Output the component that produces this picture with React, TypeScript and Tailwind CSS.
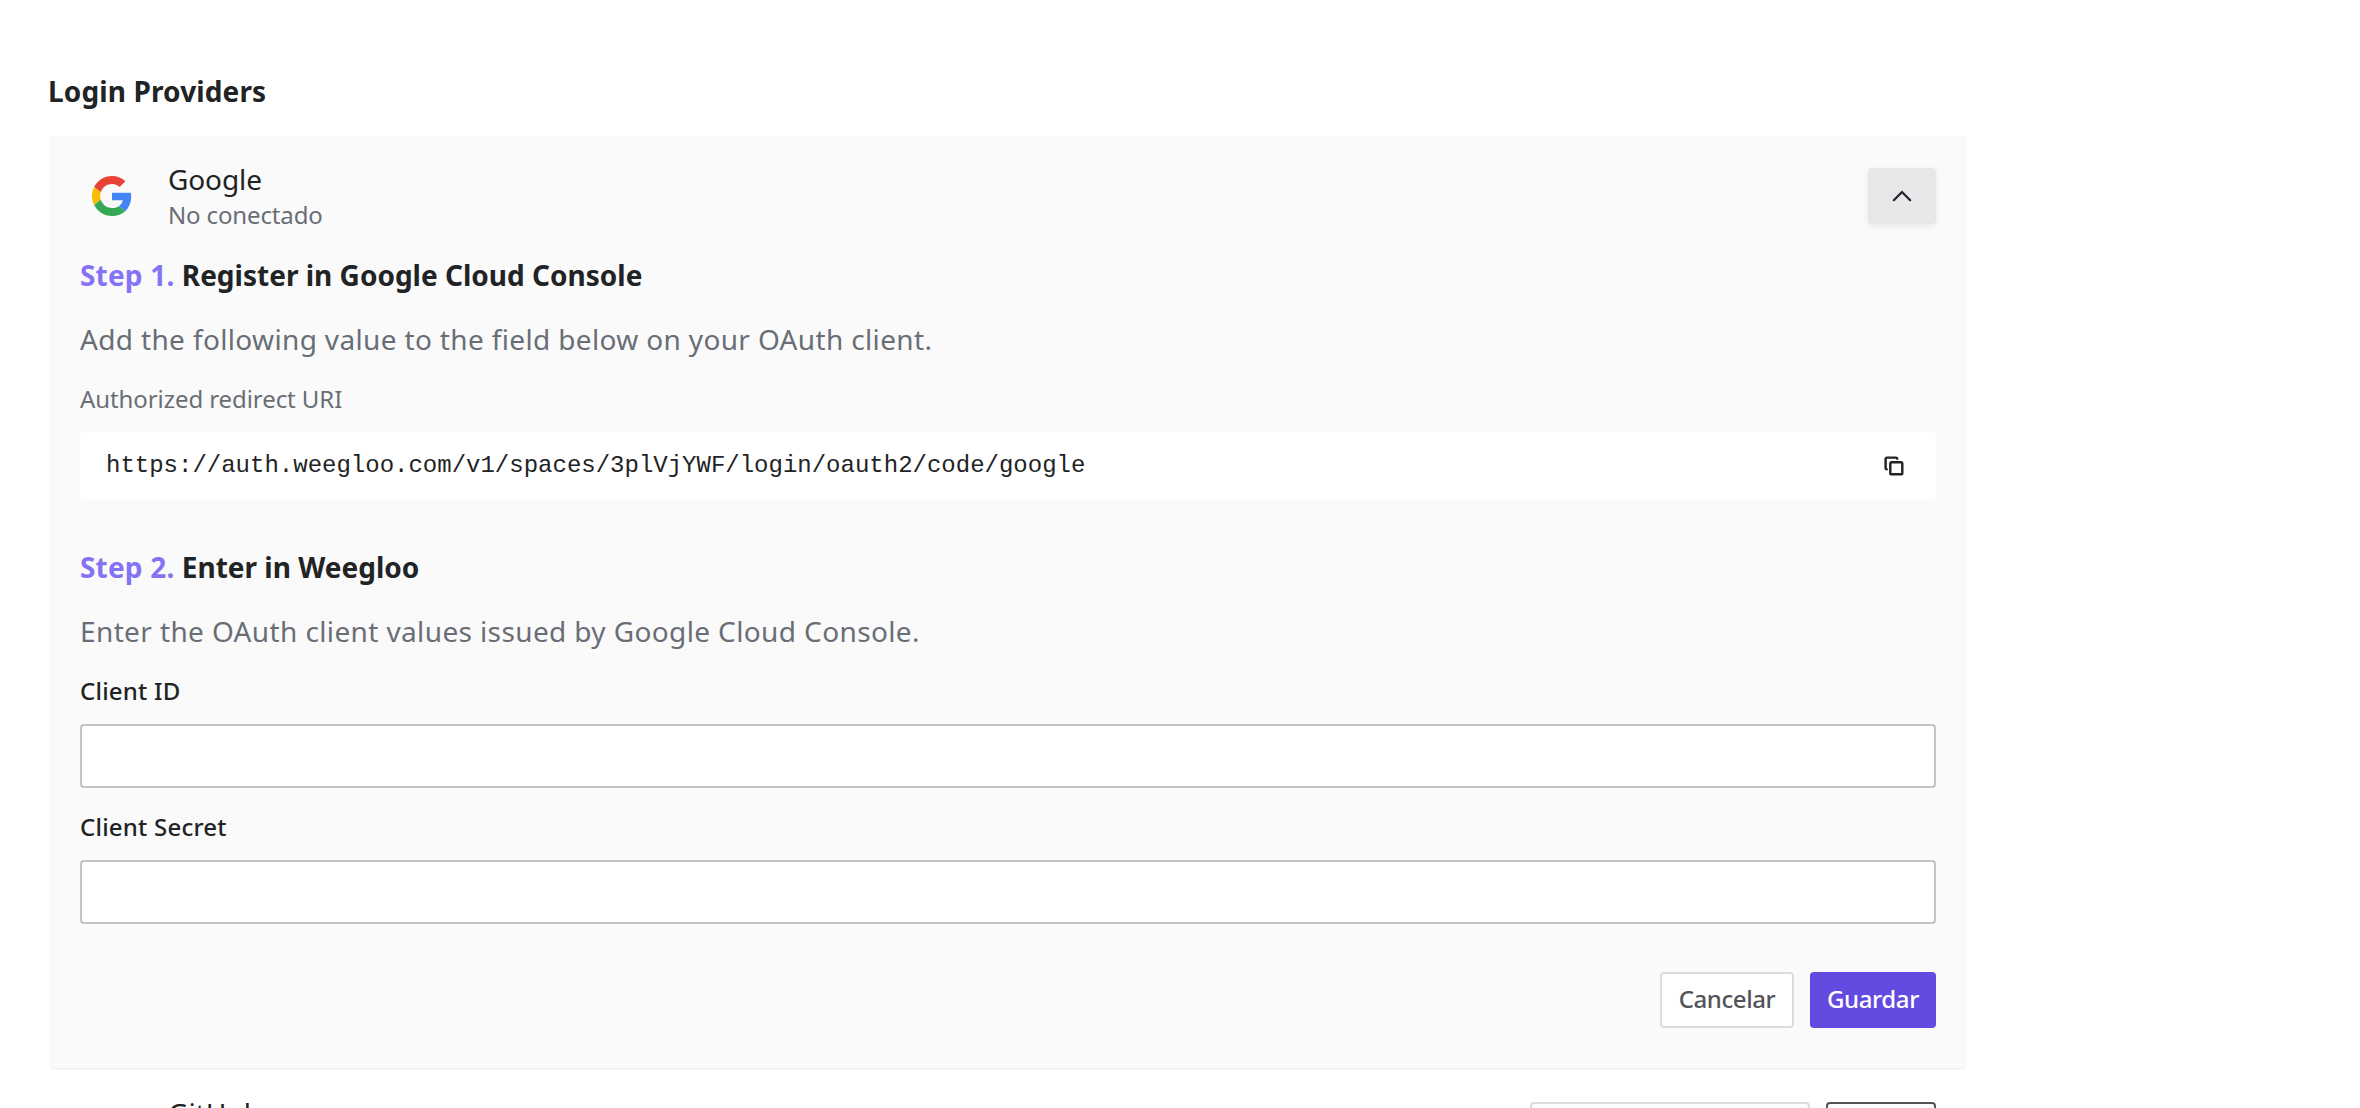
import React from 'react';

const redirectUri = 'https://auth.weegloo.com/v1/spaces/3plVjYWF/login/oauth2/code/google';

const fields = [
  { id: 'client-id', label: 'Client ID' },
  { id: 'client-secret', label: 'Client Secret' },
];

function GoogleLogo() {
  return (
    <svg viewBox="0 0 48 48" className="size-[40px]">
      <path fill="#EA4335" d="M24 9.5c3.54 0 6.71 1.22 9.21 3.6l6.85-6.85C35.9 2.38 30.47 0 24 0 14.62 0 6.51 5.38 2.56 13.22l7.98 6.19C12.43 13.72 17.74 9.5 24 9.5z" />
      <path fill="#4285F4" d="M46.98 24.55c0-1.57-.15-3.09-.38-4.55H24v9.02h12.94c-.58 2.96-2.26 5.48-4.78 7.18l7.73 6c4.51-4.18 7.09-10.36 7.09-17.65z" />
      <path fill="#FBBC05" d="M10.53 28.59c-.48-1.45-.76-2.99-.76-4.59s.27-3.14.76-4.59l-7.98-6.19C.92 16.46 0 20.12 0 24c0 3.88.92 7.54 2.56 10.78l7.97-6.19z" />
      <path fill="#34A853" d="M24 48c6.48 0 11.93-2.13 15.89-5.81l-7.73-6c-2.15 1.45-4.92 2.3-8.16 2.3-6.26 0-11.57-4.22-13.47-9.91l-7.98 6.19C6.51 42.62 14.62 48 24 48z" />
    </svg>
  );
}

function StepTitle({ step, children }: { step: number; children: React.ReactNode }) {
  return (
    <h3 className="text-[28px] leading-[40px] font-bold tracking-[0.01px]">
      <span className="tracking-[0.18px] text-[#8573f5]">Step {step}.</span> {children}
    </h3>
  );
}

export default function App() {
  return (
    <div className="h-[1108px] overflow-hidden bg-white pt-[71px] pl-12 font-['Noto_Sans',sans-serif] text-[#212325]">
      <h2 className="text-[28px] leading-[40px] font-bold tracking-[0.13px]">Login Providers</h2>

      <div className="mt-[25px] w-[1920px]">
        <section className="h-[934px] rounded-b-lg border-x border-b-2 border-x-[#fefefe] border-b-[#f3f3f4] bg-[#fafafa] px-[31px] pt-[25px]">
          <div className="flex h-[72px] items-start">
            <div className="flex h-[70px] w-16 items-center justify-center">
              <GoogleLogo />
            </div>
            <div className="ml-6 flex-1">
              <p className="text-[28px] leading-[36px] tracking-[-0.1px]">Google</p>
              <p className="text-2xl leading-[36px] tracking-[-0.14px] text-[#696e76]">No conectado</p>
            </div>
            <button className="mt-[7px] flex h-14 w-[68px] items-center justify-center rounded bg-[#e5e7e9] shadow-[0_2px_6px_rgba(0,0,0,0.08)]">
              <svg viewBox="0 0 20 12" className="h-3 w-5" fill="none" stroke="#212325" strokeWidth="2.2" strokeLinecap="round">
                <path d="M1.8 10.2 10 2l8.2 8.2" />
              </svg>
            </button>
          </div>

          <div className="mt-[22px]">
            <StepTitle step={1}>Register in Google Cloud Console</StepTitle>
            <p className="mt-6 text-[28px] leading-[40px] tracking-[0.35px] text-[#696e76]">
              Add the following value to the field below on your OAuth client.
            </p>
            <p className="mt-[22px] text-2xl leading-[36px] tracking-[-0.08px] text-[#696e76]">Authorized redirect URI</p>
            <div className="mt-[15px] flex h-[68px] items-center justify-between rounded bg-white pr-8 pl-[26px]">
              <code className="font-['Liberation_Mono',monospace] text-2xl leading-[36px]">{redirectUri}</code>
              <svg viewBox="0 0 20 20" className="size-5" fill="none" stroke="#212325" strokeWidth="2.4" strokeLinecap="round">
                <rect x="6.3" y="6.3" width="12" height="12" rx="1.4" />
                <path d="M2.8 13.4a1.4 1.4 0 0 1-1.2-1.4V3a1.4 1.4 0 0 1 1.4-1.4h9a1.4 1.4 0 0 1 1.3 1.1" />
              </svg>
            </div>
          </div>

          <div className="mt-[47px]">
            <StepTitle step={2}>Enter in Weegloo</StepTitle>
            <p className="mt-6 text-[28px] leading-[40px] tracking-[0.38px] text-[#696e76]">
              Enter the OAuth client values issued by Google Cloud Console.
            </p>
            <div className="mt-[22px] flex flex-col gap-[21px]">
              {fields.map((field) => (
                <div key={field.id}>
                  <label htmlFor={field.id} className="block text-2xl leading-[36px] font-medium tracking-[0.22px]">
                    {field.label}
                  </label>
                  <input id={field.id} className="mt-[15px] block h-16 w-full rounded border-2 border-[#c0c2c5] bg-white px-4 text-2xl outline-none" />
                </div>
              ))}
            </div>
          </div>

          <div className="mt-12 flex justify-end gap-4">
            <button className="h-14 w-[134px] rounded border-2 border-[#dcdcde] bg-white pb-0.5 text-2xl leading-[36px] font-medium tracking-[-0.4px] text-[#515459]">Cancelar</button>
            <button className="h-14 w-[126px] rounded bg-[#634ae0] pb-0.5 text-2xl leading-[36px] font-medium tracking-[-0.4px] text-white">Guardar</button>
          </div>
        </section>

        <section className="flex items-start px-8 pt-[25px]">
          <div className="ml-[88px] flex-1">
            <p className="text-[28px] leading-[36px]">GitHub</p>
          </div>
          <div className="mt-[7px] flex gap-4">
            <div className="h-14 w-[280px] rounded border-2 border-[#dcdcde] bg-white" />
            <div className="h-14 w-[110px] rounded border-2 border-[#515459] bg-white" />
          </div>
        </section>
      </div>
    </div>
  );
}
